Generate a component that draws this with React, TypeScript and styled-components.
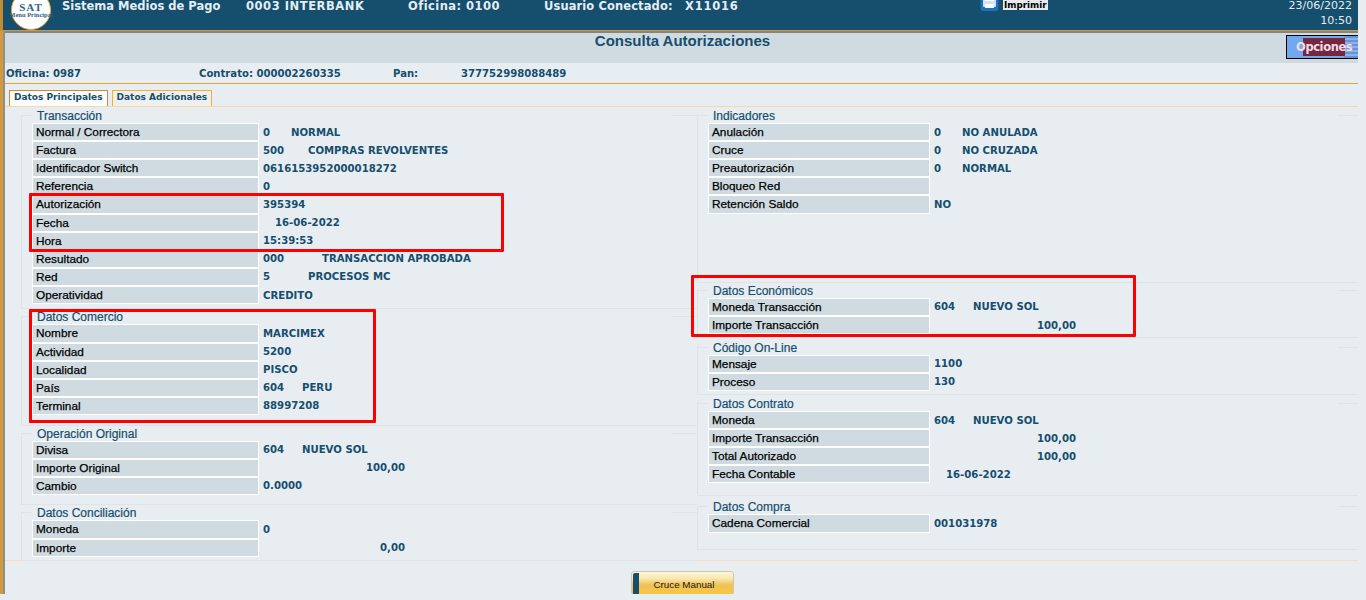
import React from 'react';
import styled, { createGlobalStyle } from 'styled-components';

const Global = createGlobalStyle`
  html, body { margin: 0; padding: 0; background: #e8edf2; }
  body { font-family: "DejaVu Sans", Verdana, sans-serif; }
`;

const BLUE = '#164e6d';

const Page = styled.div`
  position: relative;
  width: 1358px;
  height: 594px;
  overflow: hidden;
  background: #e8edf2;
`;

const Header = styled.header`
  display: flex;
  align-items: flex-start;
  height: 31px;
  box-sizing: border-box;
  padding-right: 6px;
  background: ${BLUE};
  border-left: 3px solid #c68a2e;
  border-bottom: 1px solid #d8962a;
  overflow: hidden;
`;

const Logo = styled.div`
  flex: none;
  display: flex;
  flex-direction: column;
  align-items: center;
  justify-content: flex-end;
  box-sizing: border-box;
  width: 40px;
  height: 40px;
  margin: -10px 0 0 8px;
  padding-bottom: 10px;
  border: 1px solid #efa53c;
  border-radius: 50%;
  background: #fff;
  color: #2f6484;
  font-family: "Liberation Serif", serif;
  font-weight: 700;
`;

const LogoTitle = styled.span`
  font-size: 11px;
  line-height: 9px;
  letter-spacing: 1px;
`;

const LogoSub = styled.span`
  margin-top: -1px;
  font-size: 6.5px;
  line-height: 8px;
  white-space: nowrap;
`;

const HeadText = styled.span<{ $left: number; $w: number; $ls?: number }>`
  flex: none;
  width: ${p => p.$w}px;
  margin-left: ${p => p.$left}px;
  margin-top: 1px;
  color: #e4edf2;
  font-size: 11.5px;
  font-weight: 700;
  line-height: 11px;
  letter-spacing: ${p => p.$ls ?? 0}px;
  white-space: nowrap;
`;

const PrintIcon = styled.svg`
  flex: none;
  margin: -4px 0 0 0;
`;

const PrintLabel = styled.span`
  flex: none;
  margin-left: 4px;
  padding: 0 1px;
  background: #e6ebee;
  color: #000;
  font-size: 8.8px;
  font-weight: 700;
  line-height: 11px;
  height: 10px;
`;

const Clock = styled.div`
  margin-left: auto;
  color: #e4edf2;
  font-size: 11px;
  text-align: right;
`;

const ClockLine = styled.div`
  height: 15px;
  line-height: 11px;
`;

const Frame = styled.div`
  height: 563px;
  border-left: 3px solid #d39a3c;
  box-shadow: inset 2px 0 0 #8b9094;
  box-sizing: border-box;
  padding-left: 2px;
`;

const HeadRule = styled.div`
  height: 2px;
  background: #7f8589;
`;

const TitleBand = styled.div`
  display: grid;
  grid-template-columns: 1fr auto 1fr;
  height: 30px;
  background: #d0dbe1;
`;

const Title = styled.h1`
  grid-column: 2;
  margin: 0;
  padding: 1px 0 0 2px;
  color: ${BLUE};
  font-family: "Liberation Sans", Arial, sans-serif;
  font-size: 15px;
  font-weight: 700;
  line-height: 14px;
`;

const OptionsButton = styled.button`
  grid-column: 3;
  justify-self: end;
  position: relative;
  width: 72px;
  height: 24px;
  margin-top: 2px;
  padding: 0 0 0 9px;
  border: 1px solid #000;
  border-right: 0;
  background:
    repeating-linear-gradient(180deg, #6a93d6 0 2px, #8db2ea 2px 4px) right / 14px 100% no-repeat,
    #72a9ee;
  color: #f4dcea;
  font-family: "DejaVu Sans", sans-serif;
  font-size: 11.5px;
  font-weight: 700;
  letter-spacing: -0.4px;
  text-align: left;
`;

const OptionsShade = styled.span`
  position: absolute;
  top: 2px;
  left: 16px;
  width: 42px;
  height: 18px;
  background: #74283f;
`;

const OptionsText = styled.span`
  position: relative;
`;

const InfoRow = styled.div`
  display: flex;
  align-items: center;
  height: 20px;
  border-bottom: 1px solid #e8a52f;
  color: ${BLUE};
  font-size: 10.1px;
  font-weight: 700;
`;

const InfoItem = styled.span<{ $w: number }>`
  flex: none;
  width: ${p => p.$w}px;
  padding-left: 1px;
  box-sizing: border-box;
`;

const Tabs = styled.div`
  display: flex;
  align-items: flex-end;
  gap: 4px;
  height: 22px;
  padding-left: 4px;
  border-bottom: 1px solid #fbd6a8;
`;

const Tab = styled.div<{ $active?: boolean }>`
  box-sizing: border-box;
  height: 16px;
  padding: 0 4px;
  border: 1px solid ${p => (p.$active ? '#cf8a2a' : '#f7ae2c')};
  border-bottom: 0;
  background: ${p => (p.$active ? '#fbfcfc' : '#eef0f0')};
  color: ${BLUE};
  font-size: 9px;
  font-weight: 700;
  line-height: 13px;
`;

const Columns = styled.div`
  display: grid;
  grid-template-columns: 692px 664px;
  height: 453px;
  border-bottom: 1px solid #fbdcc0;
  box-sizing: content-box;
`;

const Column = styled.div<{ $left: number }>`
  padding: 2px 0 0 ${p => p.$left}px;
  min-width: 0;
`;

const Group = styled.fieldset<{ $mt?: number; $pb: number }>`
  margin: ${p => p.$mt ?? 0}px 0 0;
  padding: 0 0 ${p => p.$pb}px 10px;
  min-width: 0;
  border: 1px solid #e0e4e6;
  border-right: 0;
`;

const Legend = styled.legend<{ $w: number }>`
  box-sizing: border-box;
  width: ${p => p.$w}px;
  height: 13px;
  margin-bottom: 1px;
  padding: 0 0 0 5px;
  color: ${BLUE};
  font-family: "Liberation Sans", Arial, sans-serif;
  font-size: 12px;
  line-height: 14px;
  -webkit-text-stroke: 0.2px ${BLUE};
`;

const Row = styled.div`
  display: flex;
  height: 18.11px;
  align-items: center;
`;

const Label = styled.div<{ $w: number }>`
  flex: none;
  box-sizing: border-box;
  width: ${p => p.$w}px;
  height: 100%;
  padding-left: 3px;
  border: 1px solid #fff;
  background: #d0dbe1;
  color: #000;
  font-family: "Liberation Sans", Arial, sans-serif;
  font-size: 11.8px;
  line-height: 16px;
  -webkit-text-stroke: 0.25px #000;
  white-space: nowrap;
`;

const Value = styled.div<{ $indent?: number }>`
  display: flex;
  margin-left: ${p => 4 + (p.$indent ?? 0)}px;
  color: ${BLUE};
  font-size: 10.15px;
  font-weight: 700;
  white-space: nowrap;
`;

const Code = styled.span<{ $w?: number }>`
  width: ${p => (p.$w ? `${p.$w}px` : 'auto')};
`;

const Amount = styled.span`
  width: 142px;
  text-align: right;
`;

const Footer = styled.div`
  display: flex;
  justify-content: center;
  padding: 10px 0 0 1px;
`;

const CruceButton = styled.button`
  position: relative;
  width: 103px;
  height: 24px;
  padding: 2px 0 0 4px;
  border: 1px solid #cfc9a8;
  border-radius: 3px;
  background: linear-gradient(180deg, #fdf6dc 0%, #f9e7ae 30%, #f0c258 58%, #f8c63f 100%);
  color: #1a1a1a;
  font-family: "Liberation Sans", Arial, sans-serif;
  font-size: 9.8px;
`;

const CruceStrip = styled.span`
  position: absolute;
  top: 1px;
  left: 1px;
  bottom: 0;
  width: 6px;
  border-radius: 2px 0 0 0;
  background: ${BLUE};
`;

const RedBox = styled.div<{ $x: number; $y: number; $w: number; $h: number }>`
  position: absolute;
  left: ${p => p.$x}px;
  top: ${p => p.$y}px;
  width: ${p => p.$w}px;
  height: ${p => p.$h}px;
  box-sizing: border-box;
  border: 3px solid #fe0000;
  border-radius: 1px;
  pointer-events: none;
`;

type Item = { label: string; code?: string; desc?: string; w?: number; indent?: number; amount?: string };
type Section = { title: string; mt?: number; pb: number; rows: Item[] };

const leftGroups: Section[] = [
  {
    title: 'Transacción',
    pb: 4,
    rows: [
      { label: 'Normal / Correctora', code: '0', desc: 'NORMAL', w: 28 },
      { label: 'Factura', code: '500', desc: 'COMPRAS REVOLVENTES', w: 45 },
      { label: 'Identificador Switch', code: '0616153952000018272' },
      { label: 'Referencia', code: '0' },
      { label: 'Autorización', code: '395394' },
      { label: 'Fecha', code: '16-06-2022', indent: 12 },
      { label: 'Hora', code: '15:39:53' },
      { label: 'Resultado', code: '000', desc: 'TRANSACCION APROBADA', w: 59 },
      { label: 'Red', code: '5', desc: 'PROCESOS MC', w: 45 },
      { label: 'Operatividad', code: 'CREDITO' },
    ],
  },
  {
    title: 'Datos Comercio',
    mt: 1.4,
    pb: 9.6,
    rows: [
      { label: 'Nombre', code: 'MARCIMEX' },
      { label: 'Actividad', code: '5200' },
      { label: 'Localidad', code: 'PISCO' },
      { label: 'País', code: '604', desc: 'PERU', w: 39 },
      { label: 'Terminal', code: '88997208' },
    ],
  },
  {
    title: 'Operación Original',
    mt: 1,
    pb: 9,
    rows: [
      { label: 'Divisa', code: '604', desc: 'NUEVO SOL', w: 39 },
      { label: 'Importe Original', amount: '100,00' },
      { label: 'Cambio', code: '0.0000' },
    ],
  },
  {
    title: 'Datos Conciliación',
    mt: 1.5,
    pb: 3,
    rows: [
      { label: 'Moneda', code: '0' },
      { label: 'Importe', amount: '0,00' },
    ],
  },
];

const rightGroups: Section[] = [
  {
    title: 'Indicadores',
    pb: 68,
    rows: [
      { label: 'Anulación', code: '0', desc: 'NO ANULADA', w: 28 },
      { label: 'Cruce', code: '0', desc: 'NO CRUZADA', w: 28 },
      { label: 'Preautorización', code: '0', desc: 'NORMAL', w: 28 },
      { label: 'Bloqueo Red' },
      { label: 'Retención Saldo', code: 'NO' },
    ],
  },
  {
    title: 'Datos Económicos',
    mt: 1.4,
    pb: 3,
    rows: [
      { label: 'Moneda Transacción', code: '604', desc: 'NUEVO SOL', w: 39 },
      { label: 'Importe Transacción', amount: '100,00' },
    ],
  },
  {
    title: 'Código On-Line',
    mt: 2.6,
    pb: 3,
    rows: [
      { label: 'Mensaje', code: '1100' },
      { label: 'Proceso', code: '130' },
    ],
  },
  {
    title: 'Datos Contrato',
    mt: 2,
    pb: 12,
    rows: [
      { label: 'Moneda', code: '604', desc: 'NUEVO SOL', w: 39 },
      { label: 'Importe Transacción', amount: '100,00' },
      { label: 'Total Autorizado', amount: '100,00' },
      { label: 'Fecha Contable', code: '16-06-2022', indent: 12 },
    ],
  },
  {
    title: 'Datos Compra',
    mt: 4,
    pb: 16,
    rows: [{ label: 'Cadena Comercial', code: '001031978' }],
  },
];

const GroupList: React.FC<{ groups: Section[]; labelWidth: number; legendWidth: number }> = ({
  groups,
  labelWidth,
  legendWidth,
}) => (
  <>
    {groups.map(g => (
      <Group key={g.title} $mt={g.mt} $pb={g.pb}>
        <Legend $w={legendWidth}>{g.title}</Legend>
        {g.rows.map(r => (
          <Row key={r.label}>
            <Label $w={labelWidth}>{r.label}</Label>
            <Value $indent={r.indent}>
              {r.amount ? <Amount>{r.amount}</Amount> : null}
              {r.code ? <Code $w={r.w}>{r.code}</Code> : null}
              {r.desc ? <span>{r.desc}</span> : null}
            </Value>
          </Row>
        ))}
      </Group>
    ))}
  </>
);

const App: React.FC = () => {
  return (
    <Page>
      <Global />
      <Header>
        <Logo>
          <LogoTitle>SAT</LogoTitle>
          <LogoSub>Menu Principal</LogoSub>
        </Logo>
        <HeadText $left={11} $w={184}>Sistema Medios de Pago</HeadText>
        <HeadText $left={0} $w={162} $ls={0.55}>0003 INTERBANK</HeadText>
        <HeadText $left={0} $w={136} $ls={0.45}>Oficina: 0100</HeadText>
        <HeadText $left={0} $w={141} $ls={0.1}>Usuario Conectado:</HeadText>
        <HeadText $left={0} $w={295} $ls={0.8}>X11016</HeadText>
        <PrintIcon width="19" height="15" viewBox="0 0 19 15">
          <rect x="0.5" y="-3" width="18" height="18" rx="3" fill="#1f6fbd" />
          <rect x="3" y="-1" width="13" height="12" rx="1" fill="#cfe4f6" />
          <rect x="5" y="0" width="9" height="5" fill="#ffffff" />
          <rect x="5" y="8" width="9" height="4" fill="#ffffff" />
        </PrintIcon>
        <PrintLabel>Imprimir</PrintLabel>
        <Clock>
          <ClockLine>23/06/2022</ClockLine>
          <ClockLine>10:50</ClockLine>
        </Clock>
      </Header>
      <Frame>
        <HeadRule />
        <TitleBand>
          <Title>Consulta Autorizaciones</Title>
          <OptionsButton>
            <OptionsShade />
            <OptionsText>Opciones</OptionsText>
          </OptionsButton>
        </TitleBand>
        <InfoRow>
          <InfoItem $w={193}>Oficina: 0987</InfoItem>
          <InfoItem $w={194}>Contrato: 000002260335</InfoItem>
          <InfoItem $w={68}>Pan:</InfoItem>
          <InfoItem $w={200}>377752998088489</InfoItem>
        </InfoRow>
        <Tabs>
          <Tab $active>Datos Principales</Tab>
          <Tab>Datos Adicionales</Tab>
        </Tabs>
        <Columns>
          <Column $left={16}>
            <GroupList groups={leftGroups} labelWidth={227} legendWidth={640} />
          </Column>
          <Column $left={0}>
            <GroupList groups={rightGroups} labelWidth={222} legendWidth={630} />
          </Column>
        </Columns>
        <Footer>
          <CruceButton>
            <CruceStrip />
            Cruce Manual
          </CruceButton>
        </Footer>
      </Frame>
      <RedBox $x={29} $y={193} $w={475} $h={59} />
      <RedBox $x={29} $y={309} $w={347} $h={114} />
      <RedBox $x={691} $y={275} $w={445} $h={62} />
    </Page>
  );
};

export default App;
